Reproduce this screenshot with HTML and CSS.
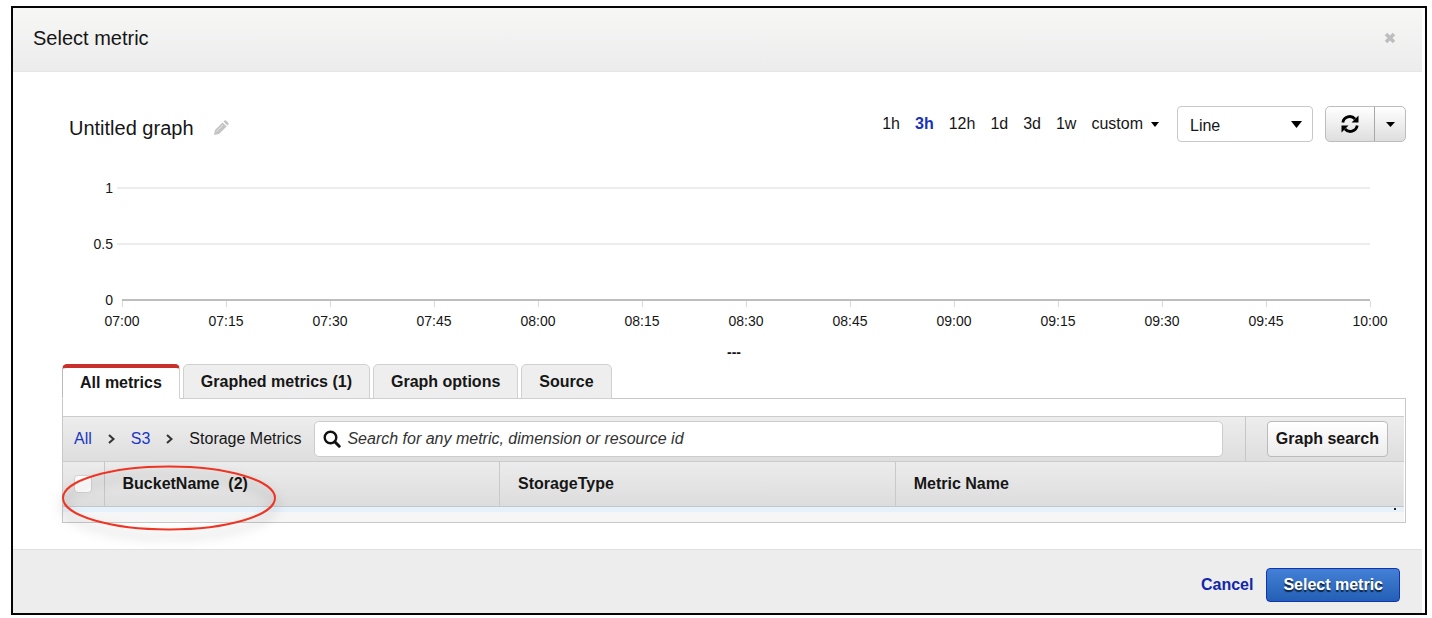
FILE: index.html
```html
<!DOCTYPE html>
<html lang="en">
<head>
<meta charset="utf-8">
<title>Select metric</title>
<link rel="stylesheet" href="styles.css">
</head>
<body>
<section class="dialog" aria-labelledby="dialog-title">
  <header class="dialog-header">
    <h1 class="title" id="dialog-title">Select metric</h1>
    <button class="icon-button" type="button" aria-label="Close">
      <svg width="12" height="12" viewBox="0 0 12 12"><path d="M2 2l8 8M10 2l-8 8" stroke="#bdbdbd" stroke-width="3.4"/></svg>
    </button>
  </header>

  <main class="dialog-body">
    <div class="graph-bar">
      <div class="graph-name">
        <h2 class="title">Untitled graph</h2>
        <button class="icon-button" type="button" aria-label="Rename graph">
          <svg width="16" height="16" viewBox="0 0 16 16" fill="#c4c4c4"><path d="M1 15l1-5 7.600-7.600 4 4L6 14z"/><path d="M10.500 1.600l1-1q.9-.7 1.800.1l2 2q.8.900 0 1.800l-1 1z"/><path d="M3.500 11.500L10 5" stroke="#eee" stroke-width=".8"/></svg>
        </button>
      </div>
      <div class="graph-tools">
        <nav class="ranges" aria-label="Time range">
          <a href="#1h">1h</a>
          <a class="current" href="#3h">3h</a>
          <a href="#12h">12h</a>
          <a href="#1d">1d</a>
          <a href="#3d">3d</a>
          <a href="#1w">1w</a>
          <a class="custom" href="#custom">custom <svg width="8" height="5" viewBox="0 0 8 5"><path d="M0 0h8L4 5z"/></svg></a>
        </nav>
        <div class="select-wrap">
          <select class="select" aria-label="Graph type"><option>Line</option></select>
          <svg class="select-caret" width="11" height="7" viewBox="0 0 11 7"><path d="M0 0h11L5.500 7z"/></svg>
        </div>
        <div class="split">
          <button class="split-main" type="button" aria-label="Refresh">
            <svg width="20" height="20" viewBox="0 0 20 20"><path d="M2.800 8.500A7 7 0 0 1 15 5M17.200 11.500A7 7 0 0 1 5 15" fill="none" stroke="#000" stroke-width="2.800"/><path d="M18.500 1.500V8.500H11.500zM1.500 18.500V11.500H8.500z"/></svg>
          </button>
          <button class="split-more" type="button" aria-label="Refresh options">
            <svg width="9" height="5" viewBox="0 0 9 5"><path d="M0 0h9L4.500 5z"/></svg>
          </button>
        </div>
      </div>
    </div>

    <div class="chart">
      <div class="grid-row"><span class="y-label">1</span><span class="line"></span></div>
      <div class="grid-row"><span class="y-label">0.5</span><span class="line"></span></div>
      <div class="grid-row"><span class="y-label">0</span><span class="line base"></span></div>
      <div class="x-axis">
        <span class="x-tick">07:00</span><span class="x-tick">07:15</span><span class="x-tick">07:30</span><span class="x-tick">07:45</span><span class="x-tick">08:00</span><span class="x-tick">08:15</span><span class="x-tick">08:30</span><span class="x-tick">08:45</span><span class="x-tick">09:00</span><span class="x-tick">09:15</span><span class="x-tick">09:30</span><span class="x-tick">09:45</span><span class="x-tick">10:00</span>
      </div>
    </div>
    <p class="legend">---</p>

    <div class="metrics">
      <div class="tabs" role="tablist">
        <button class="tab active" role="tab" aria-selected="true" type="button">All metrics</button>
        <button class="tab" role="tab" type="button">Graphed metrics (1)</button>
        <button class="tab" role="tab" type="button">Graph options</button>
        <button class="tab" role="tab" type="button">Source</button>
      </div>
      <div class="panel">
        <div class="filter-bar">
          <nav class="crumbs" aria-label="Breadcrumb">
            <a href="#all">All</a>
            <svg width="7" height="10" viewBox="0 0 7 10"><path d="M1 1l4.500 4L1 9"/></svg>
            <a href="#s3">S3</a>
            <svg width="7" height="10" viewBox="0 0 7 10"><path d="M1 1l4.500 4L1 9"/></svg>
            <span>Storage Metrics</span>
          </nav>
          <div class="search">
            <svg width="18" height="18" viewBox="0 0 18 18" fill="none" stroke="#111"><circle cx="7.500" cy="7.500" r="5.800" stroke-width="2.400"/><path d="M11.800 11.800l4.400 4.400" stroke-width="3" stroke-linecap="round"/></svg>
            <input class="search-input" type="text" aria-label="Search metrics" placeholder="Search for any metric, dimension or resource id">
          </div>
          <div class="search-action"><button class="button" type="button">Graph search</button></div>
        </div>
        <table class="table">
          <thead>
            <tr>
              <th class="check-cell"><input class="check" type="checkbox" aria-label="Select all"></th>
              <th class="name-cell">BucketName &nbsp;(2)</th>
              <th class="name-cell">StorageType</th>
              <th>Metric Name</th>
            </tr>
          </thead>
        </table>
        <div class="row-strip"><span class="scroll-dot"></span></div>
      </div>
      <svg class="highlight" width="215" height="66" viewBox="0 0 215 66"><ellipse cx="107" cy="33" rx="106" ry="31.500"/></svg>
    </div>
  </main>

  <footer class="dialog-footer">
    <a class="cancel" href="#cancel">Cancel</a>
    <button class="primary" type="button">Select metric</button>
  </footer>
</section>
</body>
</html>
```
FILE: styles.css
```css
* { box-sizing: border-box; }

body {
  margin: 0;
  padding: 6px 5px 3px 11px;
  background: #fff;
  color: #161616;
  font: 16px/20px "Liberation Sans", Arial, sans-serif;
}

button, input, select { font: inherit; color: inherit; }
button { cursor: pointer; }
a { color: inherit; text-decoration: none; }
svg { display: block; }

.dialog {
  display: flex;
  flex-direction: column;
  min-height: calc(100vh - 9px);
  border: 2px solid #050505;
}

.dialog-header {
  display: flex;
  align-items: center;
  justify-content: space-between;
  height: 64px;
  padding: 0 26px 4px 20px;
  margin-right: 3px;
  background: linear-gradient(#f7f7f6, #ececec);
  border-bottom: 1px solid #e6e6e6;
}

.title { margin: 0; font-size: 20px; line-height: 24px; font-weight: normal; }
.icon-button { padding: 0; border: 0; background: none; }

.dialog-body { flex: 1; padding: 34px 19px 26px 49px; }

.graph-bar { display: flex; justify-content: space-between; }
.graph-name { display: flex; align-items: center; gap: 19px; padding: 8px 0 0 7px; }
.graph-tools { display: flex; align-items: center; }

.ranges { display: flex; gap: 15px; margin-right: 18px; }
.ranges .current { color: #1733b8; font-weight: bold; }
.custom { display: flex; align-items: center; gap: 8px; }

.select-wrap { position: relative; width: 136px; margin-right: 12px; }
.select {
  display: block;
  width: 100%;
  height: 36px;
  padding: 4px 12px 0;
  border: 1px solid #c9c9c9;
  border-radius: 4px;
  background: #fff;
  appearance: none;
}
.select-caret { position: absolute; right: 11px; top: 15px; pointer-events: none; }

.split {
  display: flex;
  height: 36px;
  border: 1px solid #bdbdbd;
  border-radius: 5px;
  background: linear-gradient(#fff, #dedede);
}
.split-main, .split-more {
  display: flex;
  align-items: center;
  justify-content: center;
  padding: 0;
  border: 0;
  background: none;
}
.split-main { width: 48px; }
.split-more { width: 31px; border-left: 1px solid #a8a8a8; }

.chart {
  display: flex;
  flex-direction: column;
  gap: 36px;
  padding: 36px 36px 0 0;
  font-size: 14px;
}
.grid-row { display: flex; align-items: center; gap: 4px; height: 20px; }
.y-label { width: 51px; text-align: right; }
.line { flex: 1; height: 2px; background: #ededed; }
.line.base { margin-left: 5px; background: #bdbdbd; }

.x-axis { display: flex; justify-content: space-between; margin: -45px 0 0 60px; }
.x-tick {
  display: flex;
  flex-direction: column;
  align-items: center;
  gap: 4px;
  width: 0;
  white-space: nowrap;
}
.x-tick::before { content: ""; width: 1px; height: 6px; background: #d9d9d9; }

.legend { margin: 11px 0 2px; font-size: 14px; font-weight: bold; text-align: center; }

.metrics { position: relative; }
.tabs { display: flex; gap: 3px; margin-bottom: -1px; }
.tab {
  height: 35px;
  padding: 0 17px;
  border: 1px solid #d0d0d0;
  border-radius: 5px 5px 0 0;
  background: #eee;
  font-weight: bold;
}
.tab.active {
  border-top: 4px solid #c9302c;
  border-bottom-color: #fff;
  border-left-color: #bbb;
  background: #fff;
  line-height: 28px;
}

.panel { padding: 17px 1px 0 0; border: 1px solid #c8c8c8; }

.filter-bar {
  display: flex;
  align-items: center;
  height: 45px;
  border-top: 1px solid #ccc;
  background: linear-gradient(#ededed, #dedede);
}
.crumbs { display: flex; align-items: center; gap: 16px; padding: 0 13px 0 11px; }
.crumbs a { color: #1a36c4; }
.crumbs svg { fill: none; stroke: #333; stroke-width: 2; }

.search {
  display: flex;
  flex: 1;
  align-items: center;
  gap: 6px;
  height: 36px;
  padding: 0 8px;
  border: 1px solid #ccc;
  border-radius: 5px;
  background: #fff;
}
.search-input { flex: 1; padding: 0; border: 0; outline: 0; background: none; font-style: italic; }
.search-input::placeholder { color: #333; opacity: 1; }

.search-action {
  display: flex;
  align-items: center;
  align-self: stretch;
  margin-left: 22px;
  padding: 0 16px 0 21px;
  border-left: 1px solid #c6c6c6;
}
.button {
  height: 36px;
  padding: 0 8px;
  border: 1px solid #bbb;
  border-radius: 4px;
  background: linear-gradient(#fff, #ececec);
  font-weight: bold;
}

.table { width: 100%; border-collapse: collapse; table-layout: fixed; }
.table tr { background: linear-gradient(#ececec, #dcdcdc); }
.table th {
  height: 45px;
  padding: 0 18px;
  border-top: 1px solid #ccc;
  border-bottom: 1px solid #c6c6c6;
  text-align: left;
}
.table .check-cell { width: 41px; padding: 0 0 0 11px; border-right: 1px solid #c6c6c6; }
.table .name-cell { width: 29.5%; border-right: 1px solid #c9c9c9; }
.check {
  display: block;
  width: 18px;
  height: 18px;
  margin: 0;
  border: 1px solid #d2d2d2;
  border-radius: 4px;
  background: #fff;
  appearance: none;
}

.row-strip {
  display: flex;
  justify-content: flex-end;
  height: 15px;
  padding: 1px 8px 0 0;
  background: linear-gradient(#e5f1fb 5px, #f6f6f6 5px);
}
.scroll-dot { width: 2px; height: 2px; background: #222; }

.highlight { position: absolute; left: 0; bottom: -8px; overflow: visible; pointer-events: none; }
.highlight ellipse {
  fill: none;
  stroke: #ee3524;
  stroke-width: 2;
  filter: drop-shadow(0 7px 6px rgba(0, 0, 0, .3));
}

.dialog-footer {
  display: flex;
  align-items: center;
  justify-content: flex-end;
  gap: 13px;
  height: 64px;
  padding: 6px 22px 0 0;
  margin-right: 3px;
  border-top: 1px solid #e0e0e0;
  background: #ededed;
}
.cancel { color: #1226ac; font-weight: bold; }
.primary {
  height: 34px;
  padding: 0 16px;
  border: 1px solid #1233b0;
  border-radius: 4px;
  background: linear-gradient(#4480d6, #225fb5);
  color: #fff;
  font-weight: bold;
  text-shadow: 0 2px 1px rgba(0, 0, 0, .7);
}
```
